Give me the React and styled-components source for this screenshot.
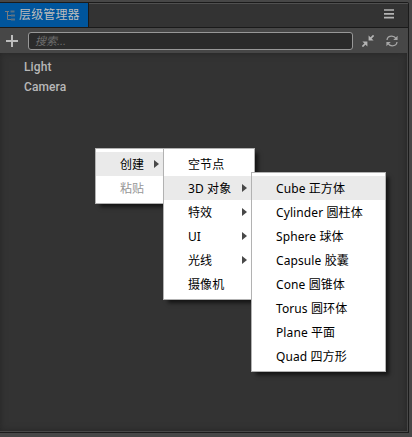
import React from "react";
import styled, { createGlobalStyle } from "styled-components";

const Global = createGlobalStyle`
  * { box-sizing: border-box; }
  body { margin: 0; background: #474747; overflow: hidden; }
`;

const Screen = styled.div`
  position: relative;
  width: 412px;
  height: 437px;
  padding-top: 2px;
  overflow: hidden;
  background: #474747;
  font-family: "Liberation Sans", "Noto Sans CJK SC", sans-serif;
`;

const Panel = styled.section`
  display: flex;
  flex-direction: column;
  width: 409px;
  height: 431px;
  border: solid #1b1b1b;
  border-width: 1px 1px 1px 0;
  border-top-right-radius: 2px;
  background: #474747;
`;

const TabBar = styled.header`
  display: flex;
  justify-content: space-between;
  height: 25px;
  flex: none;
  background: #333;
  border-bottom: 1px solid #1a1a1a;
  box-shadow: inset 0 1px #505050;
`;

const Tab = styled.div`
  display: flex;
  align-items: center;
  gap: 4px;
  width: 89px;
  padding-left: 5px;
  background: #00559c;
  border-right: 1px solid #1a1a1a;
  color: #bdbdbd;
  font-size: 12px;
  letter-spacing: 0.15px;
  line-height: 22px;
  white-space: nowrap;
`;

const MenuButton = styled.div`
  display: flex;
  padding: 6px 14px 0 0;
`;

const Toolbar = styled.div`
  display: flex;
  align-items: center;
  height: 25px;
  flex: none;
  padding: 0 9px 0 6px;
`;

const SearchBox = styled.div`
  width: 325px;
  height: 18px;
  margin: 1px 9px 0 10px;
  padding-left: 6px;
  border: 1px solid #989898;
  border-radius: 3px;
  background: #2b2b2b;
  color: #6e6e6e;
  font-size: 11px;
  font-style: italic;
  line-height: 16px;
`;

const Tools = styled.div`
  display: flex;
  align-items: center;
  gap: 12px;
`;

const Tree = styled.div`
  flex: 1;
  width: 407px;
  margin-bottom: 1px;
  padding: 4px 0 0 24px;
  background: #333;
  box-shadow: inset 0 0 7px #262626;
`;

const Node = styled.div`
  height: 20px;
  color: #b8b8b8;
  font-family: Roboto, sans-serif;
  font-size: 12px;
  font-weight: 500;
  letter-spacing: 0.1px;
  line-height: 20px;
`;

const Menu = styled.div`
  position: absolute;
  left: ${(p) => p.$x}px;
  top: ${(p) => p.$y}px;
  width: ${(p) => p.$width}px;
  padding: 3px 0;
  border: 1px solid #b2b2b2;
  background: #fff;
  box-shadow: 4px 4px 4px -1px rgba(0, 0, 0, 0.62);
`;

const Item = styled.div`
  display: flex;
  align-items: center;
  justify-content: space-between;
  height: 24px;
  padding: 0 ${(p) => p.$inset}px 0 24px;
  background: ${(p) => (p.$active ? "#eaeaea" : "transparent")};
  color: ${(p) => (p.$disabled ? "#969696" : "#000")};
  font-family: "Noto Sans", "Noto Sans CJK SC", sans-serif;
  font-size: 12px;
  letter-spacing: 0.1px;
  line-height: 24px;
  white-space: nowrap;
`;

const Label = styled.span`
  padding-top: 2px;
`;

const Arrow = styled.span`
  border: solid transparent;
  border-width: 4px 0 4px 5px;
  border-left-color: #484848;
`;

const menus = [
  { x: 95, y: 148, width: 69, inset: 4, items: [
    { text: "创建", sub: true, active: true }, { text: "粘贴", disabled: true },
  ] },
  { x: 163, y: 148, width: 92, inset: 7, items: [
    { text: "空节点" }, { text: "3D 对象", sub: true, active: true },
    { text: "特效", sub: true }, { text: "UI", sub: true },
    { text: "光线", sub: true }, { text: "摄像机" },
  ] },
  { x: 251, y: 172, width: 135, inset: 4, items: [
    { text: "Cube 正方体", active: true }, { text: "Cylinder 圆柱体" },
    { text: "Sphere 球体" }, { text: "Capsule 胶囊" }, { text: "Cone 圆锥体" },
    { text: "Torus 圆环体" }, { text: "Plane 平面" }, { text: "Quad 四方形" },
  ] },
];

const HierarchyIcon = () => (
  <svg width="10" height="11" viewBox="0 0 10 11" fill="none" stroke="#777b7f">
    <path d="M0 1.5h4M2.5 2v7.5H6M2.5 5.5H6" />
    <path d="M5.5 1.5h4M6 5.5h4M6 9.5h4" strokeWidth="2" opacity=".75" />
  </svg>
);
const PlusIcon = () => (
  <svg width="12" height="12" viewBox="0 0 12 12" stroke="#bdbdbd" strokeWidth="2">
    <path d="M6 0v12M0 6h12" />
  </svg>
);
const BarsIcon = () => (
  <svg width="10" height="10" viewBox="0 0 10 10" stroke="#b4b4b4" strokeWidth="1.7">
    <path d="M0 1h10M0 4.8h10M0 8.6h10" />
  </svg>
);
const CollapseIcon = () => (
  <svg width="12" height="12" viewBox="0 0 12 12" fill="#b4b4b4" stroke="#b4b4b4">
    <path d="M6.6.4v5h5L9.8 3.7 8.2 2.1zM5.4 11.6v-5h-5l1.8 1.7 1.6 1.6z" stroke="none" />
    <path d="M8 4l3.6-3.6M4 8L.4 11.6" strokeWidth="1.7" />
  </svg>
);
const RefreshIcon = () => (
  <svg width="12" height="12" viewBox="0 0 12 12" fill="none" stroke="#a6a6a6" strokeWidth="1.3">
    <path d="M1 5C1.3 2.5 3.4 1.2 5.8 1.2c1.9 0 3.3.9 4.4 2.4M11 7c-.3 2.5-2.4 3.8-4.8 3.8-1.9 0-3.3-.9-4.4-2.4" />
    <path d="M11.6.7v4.4H7.2zM.4 11.3V6.9h4.4z" fill="#a6a6a6" stroke="none" />
  </svg>
);

export default function App() {
  return (
    <Screen>
      <Global />
      <Panel>
        <TabBar>
          <Tab><HierarchyIcon />层级管理器</Tab>
          <MenuButton><BarsIcon /></MenuButton>
        </TabBar>
        <Toolbar>
          <PlusIcon />
          <SearchBox>搜索...</SearchBox>
          <Tools><CollapseIcon /><RefreshIcon /></Tools>
        </Toolbar>
        <Tree>
          <Node>Light</Node>
          <Node>Camera</Node>
        </Tree>
      </Panel>
      {menus.map((menu) => (
        <Menu key={menu.x} $x={menu.x} $y={menu.y} $width={menu.width}>
          {menu.items.map((item) => (
            <Item key={item.text} $inset={menu.inset} $active={item.active} $disabled={item.disabled}>
              <Label>{item.text}</Label>
              {item.sub && <Arrow />}
            </Item>
          ))}
        </Menu>
      ))}
    </Screen>
  );
}
